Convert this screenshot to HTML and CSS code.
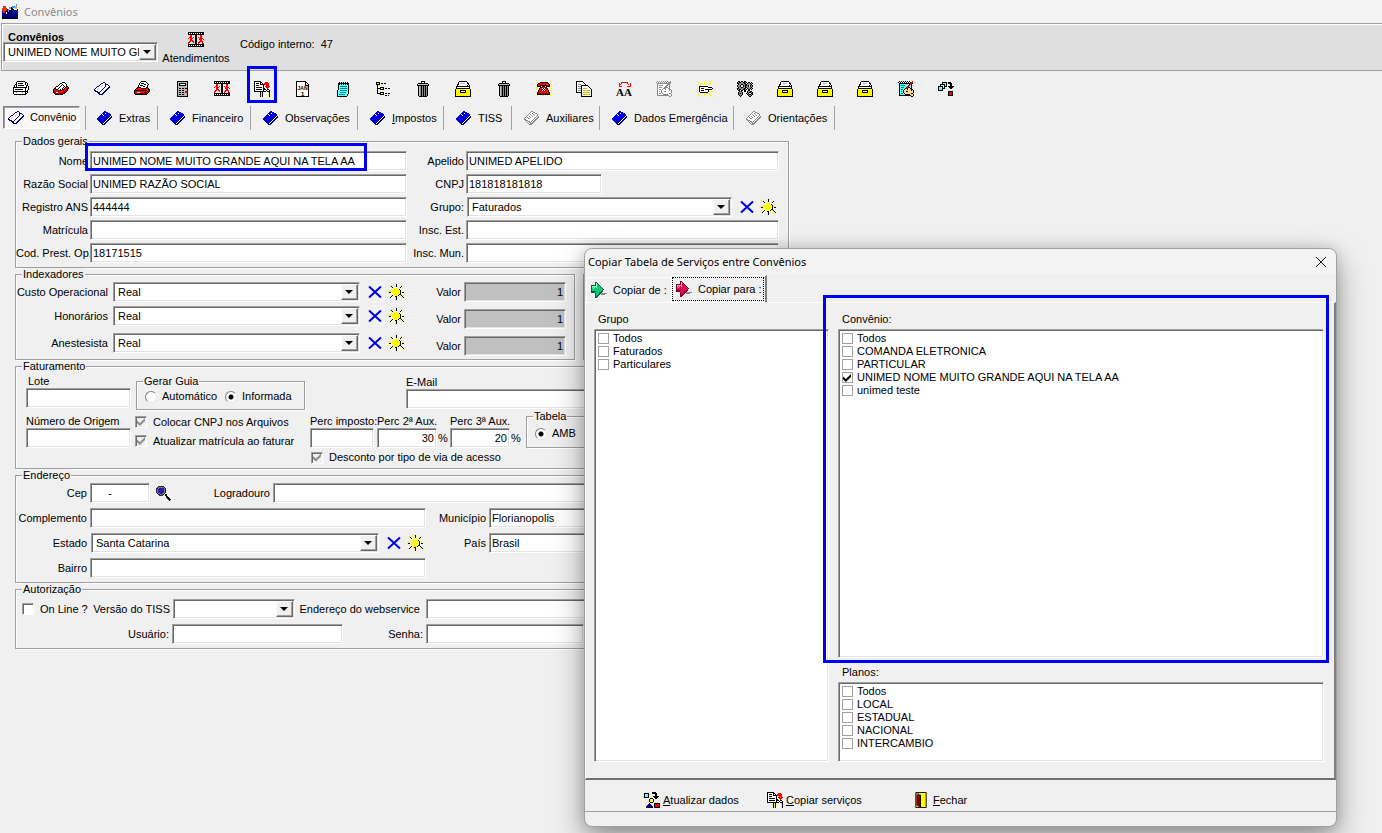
FILE: index.html
```html
<!DOCTYPE html>
<html lang="pt-BR">
<head>
<meta charset="utf-8">
<title>Convênios</title>
<link rel="stylesheet" href="styles.css">
<script src="icons.js" defer></script>
</head>
<body>
<svg class="sprite" aria-hidden="true">
  <symbol id="i-app" viewBox="0 0 16 16"><path fill="#00007c" d="M0 5h16v9H0z"/><path fill="#000" d="M0 14h16v1H0zM8 3h3v2H8zM5 7h2v2H5z"/><path fill="#e03020" d="M1 2h3v2h1v3H3v2H1V7H0V4h1z"/><path fill="#fff" d="M4 3h2v1H4zM9 1h3v2H9zM12 5h3v1h-3zM7 5h2v1H7zM4 8h1v2H4z"/><path fill="#38a0e8" d="M10 2h5v2h-5zM14 0h1v3h-1zM6 5h1v3H6z"/><path fill="#f0a040" d="M13 2h2v3h-2zM7 3h2v2H7z"/></symbol>
  <symbol id="i-calc" viewBox="0 0 16 16"><path fill="#b8b8b8" stroke="#000" d="M3.500.5h10v15h-10z"/><path fill="#fff" stroke="#000" d="M5.500 2.500h6v2h-6z"/><path stroke="#000" stroke-dasharray="2 1" d="M5 7.500h8M5 9.500h5M5 11.500h5M5 13.500h5"/><path fill="#e00" d="M11 10h2v2h-2z"/></symbol>
  <symbol id="i-bloco" viewBox="0 0 16 16"><path fill="#6ff" stroke="#000" d="M3.500 2.500h10v10l-2 3h-9z"/><path stroke="#000" stroke-dasharray="1 1" stroke-width="3" d="M4 2h10"/><path stroke="#088" d="M5 5.500h7M5 7.500h7M5 9.500h7M5 11.500h6M4 13.500h6"/></symbol>
  <symbol id="i-arvore" viewBox="0 0 16 16"><path fill="#ff0" stroke="#000" d="M1.500 1.500h3v2h-3zM5.500 6.500h3v2h-3zM5.500 11.500h3v2h-3z"/><path stroke="#000" d="M2.500 4v9M3 7.500h2M3 12.500h2"/><path stroke="#000" stroke-dasharray="2 1" d="M6 2.500h5M10 7.500h6M10 12.500h6M10 14.500h4"/></symbol>
  <symbol id="i-docs" viewBox="0 0 16 16"><path fill="#fff" stroke="#000" d="M.5.500h6l3 3v8h-9z"/><path stroke="#888" d="M2 3.500h3M2 5.500h6M2 7.500h6M2 9.500h6"/><path fill="#fff" stroke="#000" d="M5.500 4.500h6l4 4v7h-10z"/><path stroke="#c8b800" d="M7 7.500h4M7 9.500h7M7 11.500h7M7 13.500h7"/></symbol>
  <symbol id="i-x" viewBox="0 0 14 14"><path fill="none" stroke="#0000e8" stroke-width="2" d="M1 1.500l12 11M13 1.500l-12 11"/></symbol>
  <symbol id="i-lupa" viewBox="0 0 16 17"><circle cx="6" cy="6" r="5" fill="#281c9c" stroke="#222" stroke-width="1"/><circle cx="6" cy="6" r="4" fill="none" stroke="#7878a0"/><path stroke="#000" stroke-width="2.500" d="M10 10l5.500 6"/><path stroke="#ff0" d="M9 11l2 2"/></symbol>
  <symbol id="i-porta" viewBox="0 0 12 17"><path fill="#ff0" stroke="#000" d="M.5.500h11v16H.5z"/><path fill="#800000" d="M1 1h2l3 3v12H4l-3-2z"/><path fill="#0cc" d="M1 1h2v2H1z"/><path stroke="#000" d="M5.500 3v13"/></symbol>
</svg>

<main class="janela">
  <header class="titulo"><svg class="ic"><use href="#i-app"/></svg><span>Convênios</span></header>

  <section class="painel">
    <div class="escolha">
      <label for="conv">Convênios</label>
      <div class="combo"><select id="conv"><option>UNIMED NOME MUITO GRANDE AQUI NA TELA AA</option></select></div>
    </div>
    <button class="atend" type="button"><svg class="ic" data-icon="film"></svg><span>Atendimentos</span></button>
    <span class="codigo">Código interno:&nbsp; 47</span>
  </section>

  <nav class="ferramentas">
    <button type="button"><svg class="ic" data-icon="rolo"></svg></button>
    <button type="button"><svg class="ic" data-icon="fichas"></svg></button>
    <button type="button"><svg class="ic" data-icon="aberto"></svg></button>
    <button type="button"><svg class="ic" data-icon="impressora"></svg></button>
    <button type="button"><svg class="ic"><use href="#i-calc"/></svg></button>
    <button type="button"><svg class="ic" data-icon="film"></svg></button>
    <button type="button" class="marcado"><svg class="ic" data-icon="copia"></svg></button>
    <button type="button"><svg class="ic" viewBox="0 0 16 16"><path fill="#fff" stroke="#000" d="M1.500.5h9l3 3v12h-12zM10.500 1v3h3"/><text x="2.500" y="9" font-size="5" font-weight="bold">JAN</text><text x="6" y="15" font-size="6" font-weight="bold">1</text></svg></button>
    <button type="button"><svg class="ic"><use href="#i-bloco"/></svg></button>
    <button type="button"><svg class="ic"><use href="#i-arvore"/></svg></button>
    <button type="button"><svg class="ic" data-icon="lixo"></svg></button>
    <button type="button"><svg class="ic" data-icon="arquivo"></svg></button>
    <button type="button"><svg class="ic" data-icon="lixo"></svg></button>
    <button type="button"><svg class="ic" data-icon="fone"></svg></button>
    <button type="button"><svg class="ic"><use href="#i-docs"/></svg></button>
    <button type="button"><svg class="ic" viewBox="0 0 16 16"><text x="0" y="15" font-size="11" font-weight="bold" font-family="Liberation Serif, serif">AA</text><path fill="none" stroke="#f00" d="M4 4l2-2.500h5L13 4M3 2v3h3M14 2v3h-3"/></svg></button>
    <button type="button"><svg class="ic" data-icon="notaOff"></svg></button>
    <button type="button"><svg class="ic" data-icon="aviso"></svg></button>
    <button type="button"><svg class="ic" data-icon="engrenagens"></svg></button>
    <button type="button"><svg class="ic" data-icon="arquivo"></svg></button>
    <button type="button"><svg class="ic" data-icon="arquivo"></svg></button>
    <button type="button"><svg class="ic" data-icon="arquivo"></svg></button>
    <button type="button"><svg class="ic" data-icon="nota"></svg></button>
    <button type="button"><svg class="ic" data-icon="fluxo"></svg></button>
  </nav>

  <nav class="abas">
    <button type="button" class="ativa"><svg class="ic" data-icon="aberto"></svg>Convênio</button>
    <button type="button"><svg class="ic" data-icon="livro"></svg>Extras</button>
    <button type="button"><svg class="ic" data-icon="livro"></svg>Financeiro</button>
    <button type="button"><svg class="ic" data-icon="livro"></svg>Observações</button>
    <button type="button"><svg class="ic" data-icon="livro"></svg><span><u>I</u>mpostos</span></button>
    <button type="button"><svg class="ic" data-icon="livro"></svg>TISS</button>
    <button type="button"><svg class="ic" data-icon="livroOff"></svg>Auxiliares</button>
    <button type="button"><svg class="ic" data-icon="livro"></svg>Dados Emergência</button>
    <button type="button"><svg class="ic" data-icon="livroOff"></svg>Orientações</button>
  </nav>

  <form class="ficha">
    <fieldset class="grupo gerais">
      <legend>Dados gerais</legend>
      <div class="grade">
        <label for="nome">Nome</label>
        <div class="campo-marcado"><input id="nome" class="campo" value="UNIMED NOME MUITO GRANDE AQUI NA TELA AA"></div>
        <label for="apelido">Apelido</label>
        <input id="apelido" class="campo" value="UNIMED APELIDO">
        <label for="razao">Razão Social</label>
        <input id="razao" class="campo" value="UNIMED RAZÃO SOCIAL">
        <label for="cnpj">CNPJ</label>
        <input id="cnpj" class="campo w-cnpj" value="181818181818">
        <label for="ans">Registro ANS</label>
        <input id="ans" class="campo" value="444444">
        <label for="grupo">Grupo:</label>
        <div class="linha"><div class="combo w-grupo"><select id="grupo"><option>Faturados</option></select></div><button type="button" class="mini"><svg class="x"><use href="#i-x"/></svg></button><button type="button" class="mini"><svg class="ic" data-icon="sol"></svg></button></div>
        <label for="matr">Matrícula</label>
        <input id="matr" class="campo">
        <label for="iest">Insc. Est.</label>
        <input id="iest" class="campo">
        <label for="cod">Cod. Prest. Op.</label>
        <input id="cod" class="campo" value="18171515">
        <label for="imun">Insc. Mun.</label>
        <input id="imun" class="campo">
      </div>
    </fieldset>

    <div class="dupla">
      <fieldset class="grupo indices">
        <legend>Indexadores</legend>
        <div class="colunas">
          <div class="col-esq">
            <div class="linha"><label for="custo">Custo Operacional</label><div class="combo"><select id="custo"><option>Real</option></select></div><button type="button" class="mini"><svg class="x"><use href="#i-x"/></svg></button><button type="button" class="mini"><svg class="ic" data-icon="sol"></svg></button></div>
            <div class="linha"><label for="hono">Honorários</label><div class="combo"><select id="hono"><option>Real</option></select></div><button type="button" class="mini"><svg class="x"><use href="#i-x"/></svg></button><button type="button" class="mini"><svg class="ic" data-icon="sol"></svg></button></div>
            <div class="linha ultima"><label for="anes">Anestesista</label><div class="combo"><select id="anes"><option>Real</option></select></div><button type="button" class="mini"><svg class="x"><use href="#i-x"/></svg></button><button type="button" class="mini"><svg class="ic" data-icon="sol"></svg></button></div>
          </div>
          <div class="col-dir">
            <label for="v1">Valor</label><input id="v1" class="campo cinza" value="1">
            <label for="v2">Valor</label><input id="v2" class="campo cinza" value="1">
            <label for="v3">Valor</label><input id="v3" class="campo cinza" value="1">
          </div>
        </div>
      </fieldset>
      <fieldset class="grupo vazio"></fieldset>
    </div>

    <fieldset class="grupo fatur">
      <legend>Faturamento</legend>
      <div class="colunas">
        <div class="col-lote">
          <label for="lote">Lote</label><input id="lote" class="campo">
          <label for="orig">Número de Origem</label><input id="orig" class="campo">
        </div>
        <div class="col-guia">
          <fieldset class="grupo guia">
            <legend>Gerar Guia</legend>
            <div class="linha">
              <label><input type="radio" name="guia">Automático</label>
              <label><input type="radio" name="guia" checked>Informada</label>
            </div>
          </fieldset>
          <label class="marca"><input type="checkbox" class="inativo" checked>Colocar CNPJ nos Arquivos</label>
          <label class="marca"><input type="checkbox" class="inativo" checked>Atualizar matrícula ao faturar</label>
        </div>
        <div class="col-perc">
          <div class="email"><label for="email">E-Mail</label><input id="email" class="campo"></div>
          <div class="percs">
            <div class="perc p1"><label for="p1">Perc imposto:</label><input id="p1" class="campo"></div>
            <div class="perc p2"><label for="p2">Perc 2ª Aux.</label><div class="linha"><input id="p2" class="campo dir" value="30"><span>%</span></div></div>
            <div class="perc p2"><label for="p3">Perc 3ª Aux.</label><div class="linha"><input id="p3" class="campo dir" value="20"><span>%</span></div></div>
            <fieldset class="grupo tabela"><legend>Tabela</legend><label><input type="radio" name="tab" checked>AMB</label></fieldset>
          </div>
          <label class="marca desconto"><input type="checkbox" class="inativo" checked>Desconto por tipo de via de acesso</label>
        </div>
      </div>
    </fieldset>

    <fieldset class="grupo ender">
      <legend>Endereço</legend>
      <div class="linha"><label for="cep">Cep</label><input id="cep" class="campo cep" value="     -"><button type="button" class="mini lupa"><svg class="ic"><use href="#i-lupa"/></svg></button><label for="logr" class="l-logr">Logradouro</label><input id="logr" class="campo cresce"></div>
      <div class="linha"><label for="comp">Complemento</label><input id="comp" class="campo longo"><label for="muni" class="l-muni">Município</label><input id="muni" class="campo cresce" value="Florianopolis"></div>
      <div class="linha"><label for="esta">Estado</label><div class="combo w-estado"><select id="esta"><option>Santa Catarina</option></select></div><button type="button" class="mini"><svg class="x"><use href="#i-x"/></svg></button><button type="button" class="mini"><svg class="ic" data-icon="sol"></svg></button><label for="pais" class="l-pais">País</label><input id="pais" class="campo cresce" value="Brasil"></div>
      <div class="linha"><label for="bair">Bairro</label><input id="bair" class="campo longo"></div>
    </fieldset>

    <fieldset class="grupo autor">
      <legend>Autorização</legend>
      <div class="linha"><label class="online"><input type="checkbox">On Line ?</label><label for="vers" class="l-vers">Versão do TISS</label><div class="combo w-vers"><select id="vers"><option></option></select></div><label for="webs" class="l-webs">Endereço do webservice</label><input id="webs" class="campo cresce"></div>
      <div class="linha"><label for="usua" class="l-usua">Usuário:</label><input id="usua" class="campo w-usua"><label for="senh" class="l-senh">Senha:</label><input id="senh" class="campo w-senh"></div>
    </fieldset>
  </form>
</main>

<section class="dialogo" role="dialog" aria-labelledby="dlg">
  <header class="dlg-titulo"><h2 id="dlg">Copiar Tabela de Serviços entre Convênios</h2><button type="button" class="fechar"><svg viewBox="0 0 12 12"><path d="M1 1l10 10M11 1L1 11" stroke="#111" fill="none"/></svg></button></header>
  <div class="dlg-abas">
    <button type="button" class="de"><svg class="ic" data-icon="setaVerde"></svg>Copiar de :</button>
    <button type="button" class="para"><svg class="ic" data-icon="setaRosa"></svg>Copiar para :</button>
  </div>
  <div class="dlg-pagina">
    <div class="dlg-grupo">
      <h3>Grupo</h3>
      <div class="lista">
        <label><input type="checkbox">Todos</label>
        <label><input type="checkbox">Faturados</label>
        <label><input type="checkbox">Particulares</label>
      </div>
    </div>
    <div class="dlg-conv">
      <h3>Convênio:</h3>
      <div class="lista">
        <label><input type="checkbox">Todos</label>
        <label><input type="checkbox">COMANDA ELETRONICA</label>
        <label><input type="checkbox">PARTICULAR</label>
        <label><input type="checkbox" checked>UNIMED NOME MUITO GRANDE AQUI NA TELA AA</label>
        <label><input type="checkbox">unimed teste</label>
      </div>
      <h3 class="planos">Planos:</h3>
      <div class="lista">
        <label><input type="checkbox">Todos</label>
        <label><input type="checkbox">LOCAL</label>
        <label><input type="checkbox">ESTADUAL</label>
        <label><input type="checkbox">NACIONAL</label>
        <label><input type="checkbox">INTERCAMBIO</label>
      </div>
    </div>
  </div>
  <footer class="dlg-acoes">
    <button type="button" class="a1"><svg class="ic" data-icon="atualizar"></svg><span><u>A</u>tualizar dados</span></button>
    <button type="button" class="a2"><svg class="ic" data-icon="copia"></svg><span><u>C</u>opiar serviços</span></button>
    <button type="button" class="a3"><svg class="porta"><use href="#i-porta"/></svg><span><u>F</u>echar</span></button>
  </footer>
  <div class="dlg-status"></div>
</section>
</body>
</html>
```
FILE: icons.js
```js
// 16x16 bitmap icons: one character per pixel, "." is transparent.
const base = {
  k: '#000', w: '#fff', g: '#8a8a8a', s: '#c0c0c0', y: '#ff0', r: '#f00', m: '#900000',
  b: '#0000e0', n: '#000080', c: '#5ff', t: '#008080', o: '#ffd890'
};
const verde = { d: '#006040', a: '#10c878', l: '#80ffc0', g: '#8a8a8a' };
const rosa = { d: '#800030', a: '#e01050', l: '#ffa0c0', g: '#8a8a8a' };
const seta = [
  '....dd..........',
  '....dld.........',
  '....dlad........',
  'dddddlaad.......',
  'dlllllaaad......',
  'dlalalaaaad.....',
  'dalaaaaaaaad....',
  'daaaaaaaaaaad...',
  'daaaaaaaaaad....',
  'dddddaaaaadd....',
  'ddddaaaaddd.....',
  '....daaaddgggggg',
  '....daadd.gggg..',
  '....dadd........',
  '....ddd.........',
  '....dd..........'];
const maps = {
  livro: [
    '................',
    '.......bb.......',
    '......bbbbb.....',
    '.....bbbwbbbb...',
    '....bwbbbbbbbb..',
    '...bbbwbbbbbbn..',
    '..bbbbbbbbbbnwn.',
    '.bbbbbbbbbbnwnn.',
    'bbbbbbbbbbnwnn..',
    'bnbbbbbbbnwnn...',
    '.bnbbbbbnwnn....',
    '..bnbbbnwnn.....',
    '...bnbnwnn......',
    '....bnwnn.......',
    '.....nnn........'],
  livroOff: [
    '................',
    '.......gg.......',
    '......gwwgg.....',
    '.....gwwgwwgg...',
    '....gwgwwgwwwg..',
    '...gwwwgwwgwwg..',
    '..gwwgwwgwwwgwg.',
    '.gwgwwgwwwwgwgg.',
    'gwwwggwwwwgwgg..',
    'ggwwwwwwwgwgg...',
    '.gggwwwwgwgg....',
    '..gwggwgwgg.....',
    '...gwggwgg......',
    '....gwggg.......',
    '.....ggg........'],
  aberto: [
    '................',
    '.........nn.....',
    '.......nnwwn....',
    '......nwwwwnnn..',
    '.....nwwswwnwwn.',
    '...nnwwswwwnwwwn',
    '..nwwwwwwwnwwwnn',
    '.nwwswwwwnwwwnn.',
    'nwwswwwwnwwwnn..',
    'nnwwwwwnwwwnn...',
    '.nnnwwnwwwnn....',
    '...nnnwwwnn.....',
    '....nnwwnn......',
    '.....nnnn.......'],
  arquivo: [
    '....kkkkkkkk....',
    '...kwwwwwwwwk...',
    '...kwssssswwkk..',
    '..kkwwwwwwwwwk..',
    '..kwwwwwwwwwkwk.',
    '.kkkkkkkkkkkkkk.',
    '.kwwwwwwwwwwwwk.',
    '.kkkkkkkkkkkkkk.',
    'kyyyyyyyyyyyyyyk',
    'kyyyykkkkkkyyyyk',
    'kyyyykwwwwkyyyyk',
    'kyyyykkkkkkyyyyk',
    'kyyyyyyyyyyyyyyk',
    'kyyyyyyyyyyyyyyk',
    'kyyyyyyyyyyyyyyk',
    'kkkkkkkkkkkkkkkk'],
  sol: [
    '.......yk.......',
    '.y.....yk....y..',
    '..yk...yk...yk..',
    '...yk......yk...',
    '......yyyy......',
    '.....yyyyyyk....',
    '....yyyyyyyyk...',
    'yyy.yyyyyyyyk.yy',
    '.kk.yyyyyyyyk.kk',
    '....yyyyyyyyk...',
    '.....yyyyyykk...',
    '...yk.yyyyk.yk..',
    '..yk...kk....yk.',
    '.yk....yk.....yk',
    '.......yk.......',
    '.......yk.......'],
  lixo: [
    '......kkkk......',
    '......kwwk......',
    '...kkkkkkkkkk...',
    '..kssssssssssk..',
    '..kkkkkkkkkkkk..',
    '...ksgkgkgkgk...',
    '...ksgkgkgkgk...',
    '...ksgkgkgkgk...',
    '...ksgkgkgkgk...',
    '...ksgkgkgkgk...',
    '...ksgkgkgkgk...',
    '...ksgkgkgkgk...',
    '...ksgkgkgkgk...',
    '...ksgkgkgkgk...',
    '...ksgkgkgkgk...',
    '....kkkkkkkk....'],
  copia: [
    'kkkkkkk.........',
    'kwwwwwkk...rrr..',
    'kwkkkwkwk.rrrrr.',
    'kwwwwwkkkkrrrrr.',
    'kwkkkwwwwk..rrr.',
    'kwwwwwwwwk.rrrrr',
    'kwkkkkkkwk..rrr.',
    'kwwwwwwwwkk..r..',
    'kwkkkkkkwkkk.kk.',
    'kwwwwwwwwkwwkwwk',
    'kkkkkkkkkkkkwkkk',
    '......kykwwwwwyk',
    '......kykwwwwwyk',
    '......kykwwwwwyk',
    '......kykwwwwwyk',
    '......kykwwwwwyk'],
  film: [
    'kkkkkkkkkkkkkkkk',
    'kwkwkwkwkwkwkwkk',
    'kkkkkkkkkkkkkkkk',
    '..rr...kk...rr..',
    '..rr...kk...rr..',
    '.rrr.r.kk.r.rr..',
    'r.rrr..kk..rrrr.',
    '..rr...kk..rrr.r',
    '..rrr..kk...rr..',
    '.rr.rr.kk..rrrr.',
    'rr...r.kk.rr..r.',
    'r......kk.r...rr',
    'kkkkkkkkkkkkkkkk',
    'kwkwkwkwkwkwkwkk',
    'kkkkkkkkkkkkkkkk'],
  fichas: [
    '................',
    '.........kkk....',
    '.......kkwwwk...',
    '......kwwkwwwk..',
    '.....kwwkwkwwk..',
    '...kkwwkwwwkwkk.',
    '..kwwwkwwwkwkrrk',
    '.kkwwkwwwkwkrrmk',
    'krrkkwwkwkkrrmk.',
    'krrrrkkkkrrrmmk.',
    'kmrrrrrrrrrmmk..',
    'kmmwwrrrrrmmk...',
    '.kmmmmmmmmkk....',
    '..kkkkkkkk......'],
  impressora: [
    '.......kkkkk....',
    '......kwwwwwk...',
    '.....kwkkkwwwk..',
    '.....kwwwwkkwwk.',
    '....kwkkkwwwwk..',
    '....kwwwwkkwwk..',
    '...kkkkwwwwwkk..',
    '..krrrrkkkkkrrk.',
    '.krrrrrrrrrrrrkk',
    'kkkkkkkkkkkkkrmk',
    'krrrrrrrrrrkrmmk',
    'krrwwwrrrrrkmmk.',
    'kmmmmmmmmmmkmk..',
    '.kkkkkkkkkkkk...'],
  rolo: [
    '....kkkkkkkk....',
    '...kwwwwwwwwkk..',
    '...kwkkkkkwwkwk.',
    '..kkwwwwwwwwkwk.',
    '.kwkwkkkkkkwwkk.',
    '.kwkwwwwwwwwwkwk',
    'kkkkkkkkkkkkkkwk',
    'kwwwwwwwwwwwkwwk',
    'kwkkkkkkkkwwkwwk',
    'kwwwwwwwwwwwkwk.',
    'kkkkkkkkkkkkkkk.',
    'kwwgwwwwwgwwkwk.',
    'kwwwwwwwwwwwkk..',
    '.kkkkkkkkkkkk...'],
  fone: [
    'y......y.......y',
    '.y..kkkkkkkk..y.',
    '..kkrrrrrrrrky..',
    '.krrrrrrrrrrrk.y',
    '.krrkkkkkkkrrk..',
    '.kkkk.kkk.kkkky.',
    'y...kkrrrkk.....',
    'yy.krrwkwrrk.yyy',
    '...krrkwkrrk....',
    '..krrrwkwrrrk.y.',
    '..krrrrrrrrrk..y',
    '.krrrrrrrrrrrk..',
    '.kmmmmmmmmmmmk..',
    '.kkkkkkkkkkkkky.',
    'y......y......y.'],
  nota: [
    '.k.k.k.k.k.k..r.',
    'kwkwkwkwkwkwkrr.',
    '.kkkkkkkkkkkrrk.',
    '.kccccccccckrk..',
    '.kcttttcccrrck..',
    '.kcccccccrrcck..',
    '.kctttccrrkkck..',
    '.kccccckrkookk..',
    '.kcttckookoookk.',
    '.kccckoooooookok',
    '.kctckookkoooook',
    '.kccckoooooooook',
    '.kcttckooooookk.',
    '.kccccckkkkkoook',
    '.kkkkkkkkkkkkook',
    '.............kk.'],
  notaOff: [
    '.g.g.g.g.g.g..g.',
    'gwgwgwgwgwgwggg.',
    '.gggggggggggggg.',
    '.gwwwwwwwwwggg..',
    '.gwggggwwwggwg..',
    '.gwwwwwwwggwwg..',
    '.gwgggwwggggwg..',
    '.gwwwwwgggwwgg..',
    '.gwggwgwwgwwwgg.',
    '.gwwwgwwwwwwwgwg',
    '.gwgwgwwggwwwwwg',
    '.gwwwgwwwwwwwwwg',
    '.gwggwgwwwwwwgg.',
    '.gwwwwwgggggwwwg',
    '.ggggggggggggwwg',
    '.............gg.'],
  aviso: [
    'y......y.......y',
    '.yy....y.....yy.',
    '..yy...y....yy..',
    '...yy..y...yy...',
    '................',
    '..kkkkkkkkk.....',
    '..kwwwwwwwwkkkk.',
    'y.kwkkkwwwwwwwwk',
    'yykwwwwwkkkkkkk.',
    '..kwkkkwwwwk....',
    '..kwwwwwwwwk.yyy',
    '...kkkkkkkk.....',
    '..yy...y...yy...',
    '.yy....y....yy..',
    'yy.....y.....yy.',
    'y..............y'],
  engrenagens: [
    '.kk.kk.kk.......',
    'kgkkggkkgk.kk.k.',
    'kkgggggkk.kggkgk',
    '.kggkkggkkggggk.',
    'kggk..kgkkgk.kgk',
    'kggk..kgkggk.kgk',
    '.kggkkggkkggggk.',
    'kkgggggkk.kggkgk',
    'kgkkggkkgk.kk.k.',
    '.kk.kk.kk..kk...',
    '..kgk..kk.kggkk.',
    '.kgggk....kgkkgk',
    '.kgkgk...kgk..kk',
    '.kgggk....kgkkgk',
    '..kgk......kggk.',
    '...k........kk..'],
  fluxo: [
    '................',
    '....kkkkk.kkk...',
    '....kccck.kkkk..',
    '..kkkkkck...kk..',
    '..kccckck...kk..',
    'kkkkkckkk.kkkkkk',
    'kccckck....kkkk.',
    'kccckkk.....kk..',
    'kccck...........',
    'kkkkk...........',
    '..........kkkkk.',
    '..........krrrk.',
    '..........krrrk.',
    '..........krrrk.',
    '..........kkkkk.'],
  atualizar: [
    '........kkkk....',
    'kkkkk...kkkkk...',
    'kccck......kk...',
    'kccck......kk...',
    'kccck....kkkkkk.',
    'kkkkk.....kkkk..',
    '......kkk..kk...',
    '.....kyyyk......',
    '.....kyyyk......',
    '.....kyyyk......',
    '......kkk.......',
    '.....n....kkkkkk',
    '....nnn...krrrrk',
    '...nnnnn..krrrrk',
    '..nnnnnnn.krrrrk',
    '..kkkkkkk.kkkkkk'],
  setaVerde: seta,
  setaRosa: seta
};
const palettes = { setaVerde: verde, setaRosa: rosa };

for (const svg of document.querySelectorAll('svg[data-icon]')) {
  const name = svg.dataset.icon;
  const colours = palettes[name] || base;
  const runs = {};
  maps[name].forEach((row, y) => {
    for (let x = 0; x < row.length;) {
      const ch = row[x];
      let end = x + 1;
      while (row[end] === ch) end++;
      if (ch !== '.') runs[ch] = (runs[ch] || '') + `M${x} ${y}h${end - x}v1H${x}z`;
      x = end;
    }
  });
  svg.setAttribute('viewBox', '0 0 16 16');
  for (const ch in runs) {
    const path = document.createElementNS('http://www.w3.org/2000/svg', 'path');
    path.setAttribute('fill', colours[ch]);
    path.setAttribute('d', runs[ch]);
    svg.append(path);
  }
}
```
FILE: styles.css
```css
*, *::before, *::after { box-sizing: border-box; }
body {
  margin: 0;
  min-height: 100vh;
  position: relative;
  overflow: hidden;
  background: #f0f0f0;
  color: #000;
  font: 11px/13px "Liberation Sans", Arial, sans-serif;
}
.sprite { position: absolute; width: 0; height: 0; }
button, input, select { font: inherit; color: inherit; }
button { border: 0; padding: 0; background: none; }
h2, h3 { margin: 0; font-weight: normal; font-size: inherit; }
.ic { width: 16px; height: 16px; flex: none; shape-rendering: crispEdges; display: block; }
.x { width: 14px; height: 14px; display: block; }

/* window frame */
.titulo {
  display: flex; align-items: center; gap: 6px;
  height: 23px; padding-left: 2px;
  background: #f3f3f3; color: #8c8c8c;
  font: 11px/16px "Noto Sans", sans-serif;
}
.painel {
  display: flex; height: 48px; margin-left: 1px; padding-left: 1px;
  background: #dfdfdf;
  border: 1px solid #a0a0a0; border-right: 0;
  box-shadow: inset 1px 1px 0 #fff;
}
.escolha { width: 155px; padding-top: 7px; }
.escolha label { display: block; height: 11px; padding-left: 5px; font-weight: bold; }
.atend { width: 74px; display: flex; flex-direction: column; align-items: center; gap: 4px; margin-left: 1px; padding-top: 8px; }
.codigo { padding: 14px 0 0 7px; }

.ferramentas { display: grid; grid-template-columns: repeat(24, 1fr); max-width: 965px; height: 35px; margin-left: 1px; }
.ferramentas button { display: grid; place-items: center; position: relative; }
.marcado::after {
  content: ""; position: absolute; left: 5px; top: -5px; width: 30px; height: 37px;
  border: 3px solid #0000f4;
}
.abas {
  display: grid; height: 24px; margin-left: 2px;
  grid-template-columns: 83px 73px 93px 107px 86px 68px 88px 134px 101px;
}
.abas button {
  display: flex; align-items: center; gap: 6px; padding-left: 12px; white-space: nowrap;
  border-right: 1px solid #a0a0a0;
}
.abas .ativa {
  height: 23px; margin: 0 5px 0 1px; padding-left: 4px; background: #f8f8f8;
  border: 1px solid; border-color: #808080 #fff #fff #808080;
  box-shadow: inset 1px 1px 0 #a0a0a0;
}
.abas button:nth-child(2) { border-left: 1px solid #a0a0a0; padding-left: 11px; }

/* fields */
.campo, .combo, .lista {
  background: #fff; border: 1px solid; border-color: #a0a0a0 #fff #fff #a0a0a0; border-radius: 0;
  box-shadow: inset 1px 1px 0 #696969, inset -1px -1px 0 #e3e3e3;
}
.campo { height: 20px; min-width: 0; width: 100%; padding: 0 2px; outline: 0; display: block; }
.combo { position: relative; height: 20px; }
.combo select {
  appearance: none; width: 100%; height: 18px; padding: 0 18px 0 4px; border: 0;
  background: none; outline: 0; display: block; overflow: hidden;
}
.combo::after {
  content: ""; position: absolute; right: 1px; top: 1px; width: 17px; height: 16px;
  background: #f0f0f0; pointer-events: none;
  border: 1px solid; border-color: #fff #696969 #696969 #fff;
  box-shadow: inset -1px -1px 0 #a0a0a0;
}
.combo::before {
  content: ""; position: absolute; z-index: 1; right: 6px; top: 7px; pointer-events: none;
  border: 4px solid transparent; border-top-color: #000; border-bottom: 0;
}
.linha { display: flex; align-items: center; }
.dir, .cinza { text-align: right; }
.cinza { background: #c0c0c0; }
.mini { flex: none; margin-left: 8px; }
.mini + .mini { margin-left: 6px; }

input[type=checkbox] {
  appearance: none; flex: none; width: 12px; height: 12px; margin: 0; position: relative;
  background: #fff; border: 1px solid; border-color: #a0a0a0 #fff #fff #a0a0a0;
  box-shadow: inset 1px 1px 0 #696969;
}
input[type=checkbox]:checked::before {
  content: ""; position: absolute; left: 1px; top: 1px; width: 8px; height: 8px; background: #000;
  clip-path: polygon(0 30%, 0 65%, 36% 100%, 100% 38%, 100% 0, 36% 62%);
}
input.inativo { background: #f0f0f0; }
input.inativo:checked::before { background: #909090; }
input[type=radio] {
  appearance: none; flex: none; width: 12px; height: 12px; margin: 0; border-radius: 50%;
  background: #fff; border: 1px solid; border-color: #808080 #e8e8e8 #e8e8e8 #808080;
}
input[type=radio]:checked { background: radial-gradient(circle, #000 0 2px, #fff 3px); }

/* group boxes */
.ficha { max-width: 789px; padding: 5px 0 0 15px; }
.grupo {
  margin: 0; min-width: 0; padding: 0; border: 1px solid #a0a0a0;
  box-shadow: 1px 1px 0 #fff, inset 1px 1px 0 #fff;
}
.grupo > legend { margin-left: 6px; padding: 0 1px; height: 13px; background: #f0f0f0; }
.ficha label { white-space: nowrap; }

.gerais { padding: 2px 9px 4px 0; }
.grade {
  display: grid; grid-template-columns: 74px 317px 59px 1fr;
  grid-template-rows: 20px repeat(4, 20px); row-gap: 3px; align-items: center;
  padding-top: 1px;
}
.grade > label { text-align: right; padding-right: 2px; }
.campo-marcado { position: relative; }
.campo-marcado::after {
  content: ""; position: absolute; left: -5px; top: -8px; width: 282px; height: 28px;
  border: 3px solid #0000f4;
}
.w-cnpj { width: 136px; }
.w-grupo { width: 265px; margin-left: 1px; }

.dupla { display: grid; grid-template-columns: 560px 1fr; column-gap: 8px; }
.vazio { margin-top: 6px; }
.indices { padding: 1px 8px 3px 0; }
.colunas { display: flex; }
.col-esq { width: 400px; display: flex; flex-direction: column; gap: 4px; }
.col-esq .ultima { padding-top: 3px; }
.col-esq label { width: 97px; padding-right: 5px; text-align: right; }
.col-esq .combo { width: 247px; }
.col-dir { flex: 1; display: grid; grid-template-columns: 48px 1fr; row-gap: 7px; align-items: center; }
.col-dir label { text-align: right; padding-right: 3px; }

.fatur { padding: 2px 0 0; height: 109px; }
.col-lote { width: 118px; padding: 0 3px 0 10px; }
.col-lote label { display: block; }
.col-lote .campo + label { margin-top: 7px; }
.col-lote label:first-child { padding-left: 2px; }
.col-guia { width: 176px; }
.guia { width: 169px; margin-left: 2px; height: 35px; }
.guia .linha { padding: 2px 0 0 8px; gap: 8px; }
.guia label, .tabela label { display: flex; align-items: center; gap: 5px; }
.marca { display: flex; align-items: center; gap: 6px; height: 13px; margin-top: 5px; padding-left: 1px; }
.col-guia .marca { height: 14px; }
.col-perc { flex: 1; }
.email { margin-left: 96px; padding-top: 1px; }
.email label, .perc label { display: block; }
.percs { display: flex; height: 40px; padding-top: 6px; }
.perc.p1 { width: 67px; }
.p1 .campo { width: 64px; }
.perc.p2 { width: 73px; }
.p2 .campo { width: 60px; }
.p2 span { padding-left: 1px; }
.tabela { width: 140px; margin: -5px 0 0 3px; height: 38px; flex: none; }
.tabela label { padding: 4px 0 0 8px; }
.desconto { margin-top: 2px; }

.ender { padding: 1px 4px 4px 0; display: block; }
.ender .linha + .linha { margin-top: 5px; }
.ender .linha > label:first-child { width: 74px; flex: none; padding-right: 3px; text-align: right; }
.ender .cep { width: 60px; flex: none; }
.ender .lupa { margin-left: 5px; }
.ender label[class] { flex: none; text-align: right; padding-right: 3px; }
.l-logr { width: 102px; }
.longo { width: 336px; flex: none; }
.l-muni { width: 63px; }
.w-estado { width: 288px; margin-left: 1px; }
.l-pais { width: 66px; }
.cresce { flex: 1; }

.autor { padding: 3px 4px 4px 0; }
.autor .linha + .linha { margin-top: 5px; }
.autor label { flex: none; text-align: right; padding-right: 3px; }
.autor .online { display: flex; align-items: center; gap: 6px; padding-left: 6px; width: 73px; }
.l-vers { width: 84px; }
.w-vers { width: 122px; }
.autor .l-webs { width: 131px; padding-right: 6px; }
.l-usua { width: 156px; }
.w-usua { width: 171px; }
.l-senh { width: 83px; }
.w-senh { width: 158px; }

/* dialog window */
.dialogo {
  position: absolute; left: 584px; top: 248px; width: 753px; height: 579px;
  display: flex; flex-direction: column;
  background: #f0f0f0; border: 1px solid #a0a0a0; border-radius: 8px;
  box-shadow: 0 14px 32px rgba(0, 0, 0, .36), 0 0 14px rgba(0, 0, 0, .16);
}
.dlg-titulo {
  display: flex; align-items: center; justify-content: space-between;
  height: 25px; padding: 0 9px 0 3px; background: #f3f3f3; border-radius: 8px 8px 0 0;
}
.dlg-titulo h2 { font: 11px/16px "Noto Sans", sans-serif; }
.fechar svg { width: 12px; height: 12px; display: block; }
.dlg-abas { display: flex; align-items: flex-end; height: 28px; padding-left: 1px; }
.dlg-abas button { display: flex; align-items: center; gap: 6px; border-top: 1px solid #fff; border-left: 1px solid #fff; white-space: nowrap; }
.de { width: 85px; height: 25px; padding-left: 4px; }
.dlg-abas .para {
  width: 96px; height: 27px; padding-left: 4px; position: relative;
  border-right: 2px solid #808080;
}
.para::after { content: ""; position: absolute; inset: 1px 1px 1px 0; border: 1px dotted #000; }
.dlg-pagina {
  flex: 1; display: grid; grid-template-columns: 235px 1fr; column-gap: 9px;
  padding: 10px 10px 16px 8px;
  border: 1px solid #fff; border-right: 2px solid #808080; border-bottom: 2px solid #707070;
}
.dlg-grupo { display: grid; grid-template-rows: 16px 1fr; }
.dlg-conv { display: grid; grid-template-rows: 16px 1fr 24px 80px; position: relative; }
.dlg-conv::after {
  content: ""; position: absolute; left: -15px; top: -18px; right: -5px; bottom: 99px;
  border: 3px solid #0000f4; pointer-events: none;
}
.dlg-pagina h3 { padding-left: 4px; }
.dlg-pagina .planos { padding-top: 8px; }
.lista { padding: 2px 3px; }
.lista label { display: flex; align-items: center; gap: 4px; height: 13px; }
.lista input[type=checkbox] { width: 11px; height: 11px; border-color: #a0a0a0; box-shadow: none; }
.lista input[type=checkbox]:checked::before { left: 0; }
.dlg-acoes { display: flex; align-items: center; height: 31px; padding: 9px 0 0 59px; }
.dlg-acoes button { display: flex; align-items: center; gap: 3px; white-space: nowrap; }
.a1 { width: 123px; }
.a2 { width: 148px; }
.dlg-acoes .a3 { gap: 6px; }
.porta { width: 12px; height: 16px; display: block; }
.dlg-status { height: 15px; border-top: 1px solid #a0a0a0; }
```
